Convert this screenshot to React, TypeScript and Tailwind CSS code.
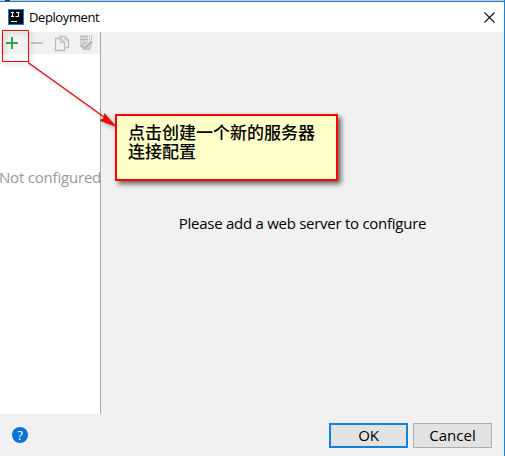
function Toolbar() {
  return (
    <div className="h-[22px] w-full bg-[#f1f1f1]">
      <svg width="100" height="22" viewBox="0 0 100 22" fill="none">
        <path d="M6 11H18M12 5V17" stroke="#35a352" strokeWidth="2" />
        <path d="M31 11H43" stroke="#c3c3c3" strokeWidth="2" />
        <path d="M60 6V4.500H65L68.500 8V15.500H65.500" stroke="#bcbcbc" strokeWidth="1.300" />
        <path d="M55.500 6.500H60.500L64.500 10.500V18.500H55.500Z" fill="#f1f1f1" stroke="#bcbcbc" strokeWidth="1.300" />
        <path d="M60.500 6.500V10.500H64.500M65 4.500V8H68.500" stroke="#bcbcbc" />
        <path d="M80 4.500H92M80 7.500H92" stroke="#b9b9b9" strokeWidth="2" strokeDasharray="8 1 1 1" />
        <path d="M80 9.500H92V13L90 18H82L80 13Z" fill="#c4c4c4" />
        <path d="M80 12L84 16.500L92 9.500" stroke="#f1f1f1" strokeWidth="4" />
        <path d="M80.500 12.500L84.500 16.500L92 9.500" stroke="#b5b5b5" strokeWidth="2.400" />
      </svg>
    </div>
  );
}

export default function App() {
  return (
    <div className="relative flex h-[456px] w-[505px] flex-col overflow-hidden border-r border-[#1883d7] bg-[#f1f1f1] font-['Open_Sans','Noto_Sans_CJK_SC',sans-serif]">
      <div className="h-px shrink-0 bg-[#c8c8c8]"><div className="ml-[5px] h-px w-[5px] bg-[#333]" /></div>
      <header className="flex h-[31px] shrink-0 items-center border-t border-[#1883d7] bg-white pl-2 pr-[9px]">
        <svg width="16" height="16" viewBox="0 0 16 16" className="shrink-0">
          <path d="M0 0H16V16H0Z" fill="#1976e8" />
          <path d="M1 1H15V15H1Z" fill="#080a12" />
          <path d="M3 3.500H6M4.500 3.500V7.500M3 7.500H6M8 3.500H11.500M10.500 3.500V7.500H7.500M3 12.500H9" stroke="white" fill="none" />
        </svg>
        <span className="ml-[5px] text-[13px] leading-[18px] tracking-[-0.4px] text-black">Deployment</span>
        <svg width="11" height="11" viewBox="0 0 11 11" className="ml-auto">
          <path d="M.5 .5L10.500 10.500M10.500 .5L.5 10.500" stroke="#111" strokeWidth="1.100" />
        </svg>
      </header>

      <main className="flex h-[382px] shrink-0">
        <aside className="w-[101px] shrink-0 border-r border-[#a8a8a8] bg-white">
          <Toolbar />
          <div className="mt-[113px] -ml-px whitespace-nowrap text-[15px] leading-5 tracking-[-0.2px] text-[#999]">Not configured</div>
        </aside>
        <section className="flex flex-1 justify-center pt-[181px] text-[15px] leading-5 text-black">
          <span className="whitespace-nowrap tracking-[-0.27px]">Please add a web server to configure</span>
        </section>
      </main>

      <footer className="flex flex-1 items-start pl-3 pr-3 pt-[9px]">
        <div className="mt-[4px] flex h-4 w-4 items-center justify-center rounded-full bg-[#0874d8] text-[13px] leading-4 text-white">?</div>
        <div className="ml-auto flex gap-[5px] text-[15px] text-black">
          <button className="flex h-[25px] w-[79px] items-center justify-center border-2 border-[#0f82dc] bg-[#e2e2e2] tracking-[-0.2px]">OK</button>
          <button className="flex h-[25px] w-[79px] items-center justify-center border border-[#adadad] bg-[#e2e2e2]">Cancel</button>
        </div>
      </footer>

      <svg className="absolute left-0 top-0 drop-shadow-[2px_2px_2px_rgba(0,0,0,0.3)]" width="130" height="140" viewBox="0 0 130 140" fill="none">
        <path d="M2.500 30.500H28.500V61.500H2.500Z" stroke="#f00" />
        <path d="M28 62.500L104 117" stroke="#d51010" strokeWidth="1.300" />
        <path d="M116 126.500L100 120.500L104 118L104.500 113.500Z" fill="#f00" stroke="#a11" strokeWidth=".6" />
      </svg>
      <div className="absolute left-[115px] top-[114px] h-[67px] w-[223px] border-2 border-[#f00] bg-[#ffffc8] pl-[11px] pt-[6px] font-['Noto_Sans_CJK_SC',sans-serif] text-[17px] font-medium leading-[19px] text-black shadow-[3px_3px_5px_rgba(0,0,0,0.6)]">
        <p className="whitespace-nowrap">点击创建一个新的服务器<br />连接配置</p>
      </div>
    </div>
  );
}
